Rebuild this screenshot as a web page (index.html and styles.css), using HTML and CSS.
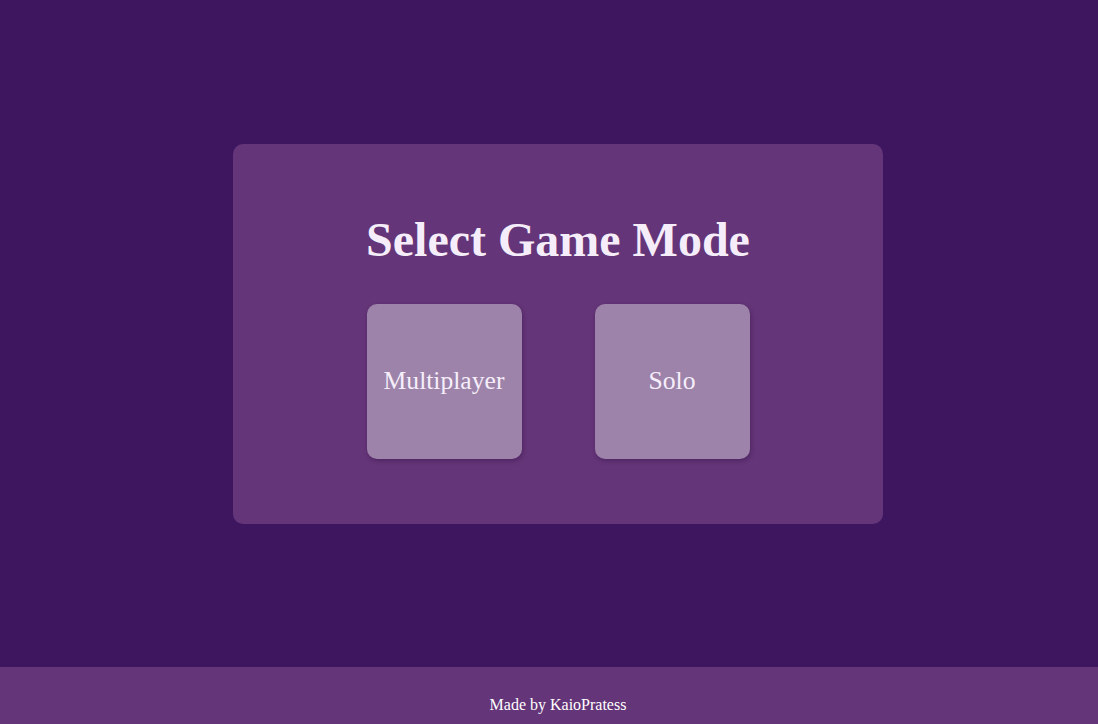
FILE: index.html
```html
<!DOCTYPE html>
<html lang="en">
<head>
<meta charset="UTF-8">
<title>Select Game Mode</title>
<link rel="stylesheet" href="styles.css">
</head>
<body>
  <main class="main">
    <section class="card">
      <h1 class="title">Select Game Mode</h1>
      <div class="modes">
        <button class="mode">Multiplayer</button>
        <button class="mode">Solo</button>
      </div>
    </section>
  </main>
  <footer class="footer">Made by KaioPratess</footer>
</body>
</html>
```

FILE: styles.css
```css
* { box-sizing: border-box; }
html, body { margin: 0; padding: 0; }
body {
  background: #3e1660;
  font-family: "Liberation Serif", "Times New Roman", serif;
  color: #f5eefa;
  min-height: 100vh;
  display: flex;
  flex-direction: column;
}
.main {
  flex: 1;
  display: flex;
  align-items: center;
  justify-content: center;
  padding-left: 18px;
}
.card {
  width: 650px;
  height: 380px;
  background: #643578;
  border-radius: 10px;
  display: flex;
  flex-direction: column;
  align-items: center;
  padding-top: 69px;
}
.title {
  margin: 0 0 38px;
  font-size: 48px;
  font-weight: bold;
  line-height: 53px;
  color: #f5eefa;
}
.modes {
  display: flex;
  gap: 73px;
}
.mode {
  width: 155px;
  height: 155px;
  border: none;
  border-radius: 10px;
  background: #9d83a9;
  color: #f5eefa;
  font-family: "Liberation Serif", "Times New Roman", serif;
  font-size: 25.6px;
  padding: 0;
  box-shadow: 1px 2px 4px rgba(40, 10, 60, 0.35);
  cursor: pointer;
}
.footer {
  background: #643578;
  height: 57px;
  text-align: center;
  font-size: 16px;
  line-height: 18px;
  padding-top: 29px;
  padding-left: 18px;
  color: #ffffff;
}
```
